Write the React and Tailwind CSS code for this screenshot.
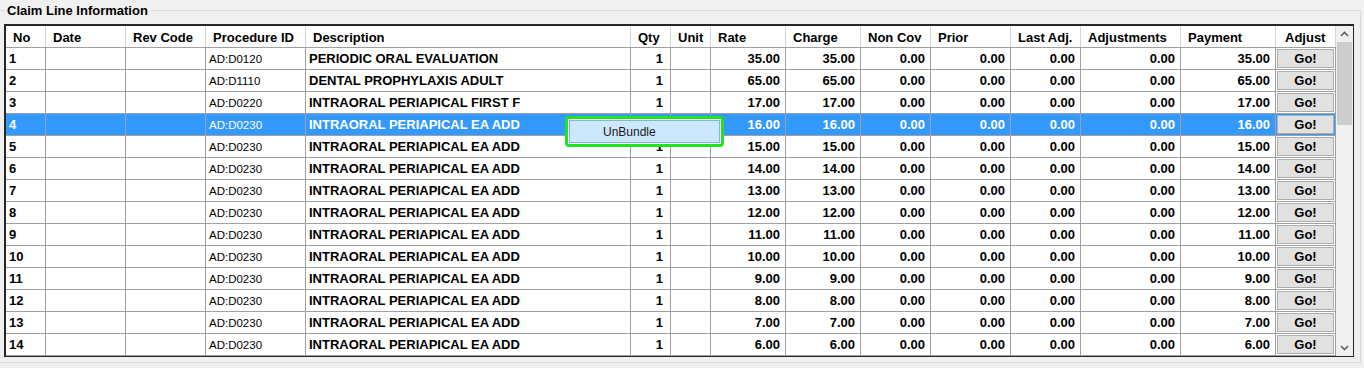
import React from 'react';

const COLS = [
  { key: 'no',    label: 'No',           w: 'w-[40px]',  align: 'left'  },
  { key: 'date',  label: 'Date',         w: 'w-[80px]',  align: 'left'  },
  { key: 'rev',   label: 'Rev Code',     w: 'w-[80px]',  align: 'left'  },
  { key: 'proc',  label: 'Procedure ID', w: 'w-[100px]', align: 'left'  },
  { key: 'desc',  label: 'Description',  w: 'w-[325px]', align: 'left'  },
  { key: 'qty',   label: 'Qty',          w: 'w-[40px]',  align: 'right' },
  { key: 'unit',  label: 'Unit',         w: 'w-[40px]',  align: 'right' },
  { key: 'rate',  label: 'Rate',         w: 'w-[75px]',  align: 'right' },
  { key: 'chg',   label: 'Charge',       w: 'w-[75px]',  align: 'right' },
  { key: 'ncov',  label: 'Non Cov',      w: 'w-[70px]',  align: 'right' },
  { key: 'prior', label: 'Prior',        w: 'w-[80px]',  align: 'right' },
  { key: 'last',  label: 'Last Adj.',    w: 'w-[70px]',  align: 'right' },
  { key: 'adjs',  label: 'Adjustments',  w: 'w-[100px]', align: 'right' },
  { key: 'pay',   label: 'Payment',      w: 'w-[95px]',  align: 'right' },
];

const LINES = [
  ['AD:D0120', 'PERIODIC ORAL EVALUATION', 35],
  ['AD:D1110', 'DENTAL PROPHYLAXIS ADULT', 65],
  ['AD:D0220', 'INTRAORAL PERIAPICAL FIRST F', 17],
  ['AD:D0230', 'INTRAORAL PERIAPICAL EA ADD', 16],
  ['AD:D0230', 'INTRAORAL PERIAPICAL EA ADD', 15],
  ['AD:D0230', 'INTRAORAL PERIAPICAL EA ADD', 14],
  ['AD:D0230', 'INTRAORAL PERIAPICAL EA ADD', 13],
  ['AD:D0230', 'INTRAORAL PERIAPICAL EA ADD', 12],
  ['AD:D0230', 'INTRAORAL PERIAPICAL EA ADD', 11],
  ['AD:D0230', 'INTRAORAL PERIAPICAL EA ADD', 10],
  ['AD:D0230', 'INTRAORAL PERIAPICAL EA ADD', 9],
  ['AD:D0230', 'INTRAORAL PERIAPICAL EA ADD', 8],
  ['AD:D0230', 'INTRAORAL PERIAPICAL EA ADD', 7],
  ['AD:D0230', 'INTRAORAL PERIAPICAL EA ADD', 6],
].map(([proc, desc, amt], i) => ({
  no: String(i + 1),
  date: '',
  rev: '',
  proc,
  desc,
  qty: '1',
  unit: '',
  rate: amt.toFixed(2),
  chg: amt.toFixed(2),
  ncov: '0.00',
  prior: '0.00',
  last: '0.00',
  adjs: '0.00',
  pay: amt.toFixed(2),
}));

const SELECTED = 3;

const Chevron = ({ down }) => (
  <svg width="9" height="6" viewBox="0 0 9 6" className="block">
    <path
      d={down ? 'M1 1 L4.5 4.5 L8 1' : 'M1 5 L4.5 1.5 L8 5'}
      fill="none"
      stroke="#606060"
      strokeWidth="1.6"
    />
  </svg>
);

const App = () => {
  return (
    <div className="relative w-[1364px] h-[368px] overflow-hidden bg-[#f0f0f0] text-black font-['Liberation_Sans',Arial,sans-serif]">
      {/* Group box */}
      <div className="relative mt-[10px] mr-[3px] h-[353px] border-t border-r border-b border-[#dcdcdc] pt-[13px] pl-[4px]">
        <span className="absolute -top-[8px] left-[5px] bg-[#f0f0f0] px-[2px] text-[13px] leading-[15px] font-bold">
          Claim Line Information
        </span>

        {/* Grid */}
        <div className="flex w-[1350px] h-[333px] overflow-hidden border-t-2 border-l-2 border-r border-b border-[#262626] bg-white">
          <div className="flex flex-col w-[1330px]">
            {/* Header */}
            <div className="flex h-[22px] shrink-0 border-b border-[#a0a0a0] bg-white">
              {COLS.map((c) => (
                <div
                  key={c.key}
                  className={`${c.w} shrink-0 border-r border-[#d5d5d5] pl-[7px] pt-[2px] text-[13px] leading-[19px] font-bold whitespace-nowrap overflow-hidden`}
                >
                  {c.label}
                </div>
              ))}
              <div className="w-[60px] shrink-0 border-r border-[#d5d5d5] pl-[9px] pt-[2px] text-[13px] leading-[19px] font-bold">
                Adjust
              </div>
            </div>

            {/* Rows */}
            {LINES.map((row, i) => {
              const sel = i === SELECTED;
              return (
                <div
                  key={i}
                  className={`flex h-[22px] shrink-0 border-b border-[#a0a0a0] ${sel ? 'bg-[#3399ff] text-white' : 'bg-white'}`}
                >
                  {COLS.map((c) => (
                    <div
                      key={c.key}
                      className={`${c.w} shrink-0 border-r border-[#a0a0a0] whitespace-nowrap overflow-hidden pt-[1px] leading-[20px] ${
                        c.key === 'proc'
                          ? 'pl-[3px] text-[11.5px] font-normal'
                          : 'text-[13px] font-bold'
                      } ${c.align === 'right' ? 'text-right pr-[5px]' : c.key === 'proc' ? '' : 'pl-[3px]'} ${
                        c.key === 'qty' ? 'pr-[7px]' : ''
                      }`}
                    >
                      {row[c.key]}
                    </div>
                  ))}
                  <div className="w-[60px] shrink-0 border-r border-[#a0a0a0] p-[1px]">
                    <div className="flex items-center justify-center w-full h-full border border-[#adadad] bg-[#e1e1e1] pt-[1px] text-[13px] leading-[16px] font-bold text-black">
                      Go!
                    </div>
                  </div>
                </div>
              );
            })}
          </div>

          {/* Vertical scrollbar */}
          <div className="flex flex-col w-[17px] shrink-0 bg-[#f0f0f0]">
            <div className="flex items-center justify-center h-[16px] shrink-0">
              <Chevron />
            </div>
            <div className="ml-[1px] w-[15px] h-[83px] shrink-0 bg-[#cdcdcd]" />
            <div className="flex-1" />
            <div className="flex items-center justify-center h-[17px] shrink-0">
              <Chevron down />
            </div>
          </div>
        </div>
      </div>

      {/* Context menu */}
      <div className="absolute left-[565px] top-[116px] w-[159px] h-[31px] rounded-[4px] border-[3px] border-[#1ee51e] bg-white p-[1px]">
        <div className="flex items-center h-full border border-[#7eb4ea] bg-[#cce8ff] pl-[33px] text-[12px] leading-[14px] text-[#1a1a1a]">
          UnBundle
        </div>
      </div>
    </div>
  );
};

export default App;
